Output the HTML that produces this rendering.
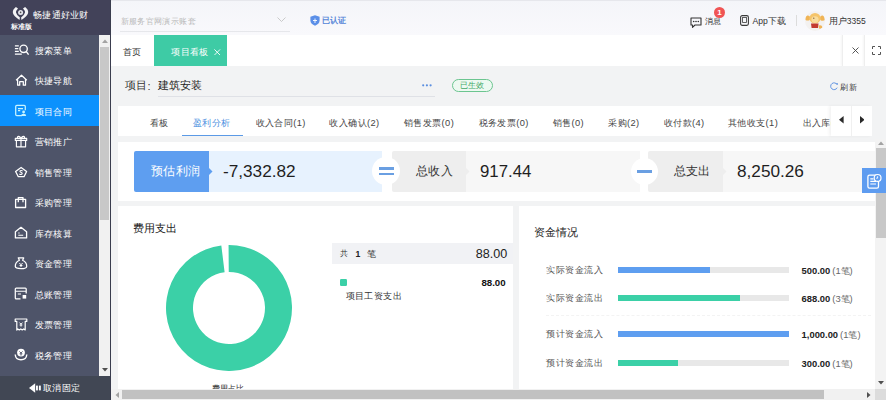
<!DOCTYPE html>
<html><head><meta charset="utf-8">
<style>
*{box-sizing:border-box;margin:0;padding:0}
html,body{width:886px;height:400px;overflow:hidden;background:#f2f3f4;font-family:"Liberation Sans",sans-serif;color:#333}
.a{position:absolute}
.t{position:absolute;white-space:nowrap;line-height:1}
#side{left:0;top:0;width:111px;height:400px;background:#4e5469}
#logo{left:0;top:0;width:111px;height:34.5px;background:#424259}
.mi{position:absolute;left:0;width:99px;height:30.5px;color:#fff;font-size:9.3px;letter-spacing:0.45px}
.mi span{position:absolute;left:34.5px;top:12.4px;line-height:1}
.mi svg{position:absolute;left:14px;top:10.5px}
.mi.on{background:#0c91fd}
#sbar{left:99px;top:34.5px;width:11px;height:341.5px;background:#f1f1f1}
#sthumb{left:100px;top:47px;width:9px;height:173px;background:#c8c8c8}
#sbot{left:0;top:376px;width:111px;height:24px;background:#414754;color:#fff}
#hdr{left:111px;top:0;width:775px;height:35px;background:linear-gradient(#f4f5f9,#f9f9fc)}
#tabbar{left:111px;top:35px;width:775px;height:30.6px;background:#fff}
.card{position:absolute;background:#fff}
.tab{position:absolute;top:119.2px;font-size:9.3px;letter-spacing:0.4px;color:#444;white-space:nowrap;line-height:1}
.seg{position:absolute;top:150.6px;height:41px}
.lab{position:absolute;top:165.3px;font-size:12.3px;letter-spacing:0.45px;line-height:1;white-space:nowrap}
.val{position:absolute;top:162.7px;font-size:17.2px;line-height:1;color:#1f1f1f;white-space:nowrap}
.circ{position:absolute;width:27px;height:27px;border-radius:50%;background:#fff}
.flab{position:absolute;font-size:9.3px;letter-spacing:0.45px;color:#555;line-height:1;white-space:nowrap;left:546.3px}
.track{position:absolute;left:618px;width:171px;height:6px;background:#e8e8e8}
.fill{position:absolute;left:0;top:0;height:6px}
.fval{position:absolute;left:801.6px;font-size:9.4px;line-height:1;white-space:nowrap;color:#222}
.fval b{font-weight:bold}
.fval i{font-style:normal;color:#666;margin-left:2px}
</style></head><body>
<!-- sidebar -->
<div id="side" class="a"></div>
<div id="logo" class="a">
  <svg class="a" style="left:12px;top:6px" width="18" height="15" viewBox="0 0 18 15">
    <path d="M3.9 0.9Q0.3 3.6 0.9 6.9Q1.5 9.6 7.5 14.0L7.9 11.4Q4.3 8.8 4.0 6.6Q3.8 4.6 6.0 2.4Z" fill="#f4f4f6"/>
    <path d="M13.1 0.9Q16.7 3.6 16.1 6.9Q15.5 9.6 9.5 14.0L9.1 11.4Q12.7 8.8 13.0 6.6Q13.2 4.6 11.0 2.4Z" fill="#f4f4f6"/>
    <circle cx="8.6" cy="6.4" r="2.5" fill="#e4e4ea"/><circle cx="8.6" cy="6.4" r="0.8" fill="#555"/>
  </svg>
  <div class="t" style="left:33px;top:11px;font-size:9.3px;color:#fff;letter-spacing:0.3px">畅捷通好业财</div>
  <div class="t" style="left:10.8px;top:24.4px;font-size:6.7px;color:#fff;font-weight:bold">标准版</div>
</div>

<div class="mi" style="top:34.50px"><span>搜索菜单</span></div>
<div class="mi" style="top:64.98px"><span>快捷导航</span></div>
<div class="mi on" style="top:95.46px"><span>项目合同</span></div>
<div class="mi" style="top:125.94px"><span>营销推广</span></div>
<div class="mi" style="top:156.42px"><span>销售管理</span></div>
<div class="mi" style="top:186.90px"><span>采购管理</span></div>
<div class="mi" style="top:217.38px"><span>库存核算</span></div>
<div class="mi" style="top:247.86px"><span>资金管理</span></div>
<div class="mi" style="top:278.34px"><span>总账管理</span></div>
<div class="mi" style="top:308.82px"><span>发票管理</span></div>
<div class="mi" style="top:339.30px"><span>税务管理</span></div>

<svg class="a" style="left:0;top:0;pointer-events:none" width="111" height="400" viewBox="0 0 111 400" fill="none" stroke="#fff" stroke-width="1.25">
  <!-- search menu -->
  <path d="M14.9 45.8H18.8M14.9 48.6H18.3M14.9 51.4H18.8M14.9 54.2H21.8"/>
  <circle cx="23.6" cy="48.8" r="3.7" stroke-width="1.35"/>
  <path d="M26.3 51.6L28.6 54.6" stroke-width="1.4"/>
  <!-- home -->
  <path d="M16.1 80.3L21.5 75.2L26.8 80.3M17.6 79.4V85.2H19.7V81.7H23.3V85.2H25.5V79.4" stroke-linejoin="round"/>
  <!-- contract (active) -->
  <path d="M22 115.6H16.8Q15.7 115.6 15.7 114.5V106.5Q15.7 105.4 16.8 105.4H24.2Q25.3 105.4 25.3 106.5V110.2" stroke="#c8f4ff"/>
  <path d="M18 108.5H23M18 110.6H20.2" stroke="#c8f4ff"/>
  <circle cx="23.6" cy="112" r="1.4" fill="#c8f4ff" stroke="none"/>
  <path d="M21 115.9Q21 113.8 23.6 113.8Q26.2 113.8 26.2 115.9Z" fill="#c8f4ff" stroke="none"/>
  <!-- gift -->
  <path d="M15.3 138.4H26.7V140.4H15.3Z M16.4 140.4V146.8H25.6V140.4 M21 138.4V146.8 M21 138.2Q19.5 135.8 17.8 136.6Q17 137.4 18 138.2 M21 138.2Q22.5 135.8 24.2 136.6Q25 137.4 24 138.2" stroke-linejoin="round" stroke-width="1.15"/>
  <!-- sales pentagon -->
  <path d="M21.1 167.5L26.6 171.5L24 176.7H18.3L15.6 171.5Z" stroke-linejoin="round" stroke-width="1.3"/>
  <path d="M22.6 171Q21.6 170.2 20.4 170.7Q19.4 171.3 20.6 172.1L21.6 172.7Q22.8 173.5 21.6 174.3Q20.4 174.8 19.4 174" stroke-width="1.1"/>
  <!-- purchase bag -->
  <path d="M15.6 199.3H25.6V207.5H15.6Z M18.3 202.3V197.6H23V202.3" stroke-linejoin="round" stroke-width="1.3"/>
  <!-- warehouse -->
  <path d="M15.4 231.8L21 227.3L26.6 231.8V237.9H15.4Z" stroke-linejoin="round" stroke-width="1.3"/>
  <path d="M18.3 233H19.6M18.3 235.3H23.2" stroke-width="1.1"/>
  <!-- money bag -->
  <path d="M18.3 257.9H23.7L22.6 260.3Q26.8 262.3 26.7 266.4Q26.6 268.6 21 268.6Q15.4 268.6 15.3 266.4Q15.2 262.3 19.4 260.3Z" stroke-linejoin="round" stroke-width="1.25"/>
  <path d="M19.4 263L21 264.8L22.6 263M21 264.8V267M19.6 265.5H22.4" stroke-width="1"/>
  <!-- ledger -->
  <path d="M20.5 298.8H16.2Q15.3 298.8 15.3 297.9V289Q15.3 288.1 16.2 288.1H25.3Q26.2 288.1 26.2 289V293.5" stroke-width="1.25"/>
  <path d="M15.5 291.2H26M17.8 294H21" stroke-width="1.1"/>
  <rect x="22.6" y="295" width="3.6" height="3.6" fill="#fff" stroke="none"/>
  <!-- invoice -->
  <path d="M15.2 319H26.8V321.4H25.2V330L23.7 328.9L22.2 330L20.8 328.9L19.3 330L17.8 328.9L16.8 330V321.4H15.2Z" stroke-linejoin="round" stroke-width="1.2"/>
  <path d="M19.5 322.6L21 324.2L22.5 322.6M21 324.2V326.6M19.6 325H22.4" stroke-width="1"/>
  <!-- tax -->
  <path d="M15.2 354.5Q15.6 359.8 21 359.8Q26.4 359.8 26.8 354.5" stroke-width="1.4"/>
  <circle cx="21" cy="352.6" r="3.9" fill="#fff" stroke="none"/>
  <path d="M19.4 351.4L21 353L22.6 351.4M21 353V355.6M19.6 353.8H22.4" stroke="#4e5469" stroke-width="0.9"/>
</svg>
<div id="sbar" class="a"></div>
<div id="sthumb" class="a"></div>
<svg class="a" style="left:101.5px;top:38.5px" width="6" height="4"><path d="M0 4L3 0.5L6 4Z" fill="#a3a3a3"/></svg>
<svg class="a" style="left:101.5px;top:367.5px" width="6" height="4"><path d="M0 0L3 3.5L6 0Z" fill="#505050"/></svg>
<div id="sbot" class="a">
  <svg class="a" style="left:28.7px;top:7.3px" width="13" height="10" viewBox="0 0 13 10"><path d="M0 5L6.2 0.2V9.8Z" fill="#fff"/><rect x="7" y="2.6" width="1.9" height="4.8" fill="#fff"/><rect x="9.9" y="2.6" width="1.9" height="4.8" fill="#fff"/></svg>
  <div class="t" style="left:43px;top:8.3px;font-size:9.3px;letter-spacing:0.4px;color:#fff">取消固定</div>
</div>
<div class="a" style="left:110px;top:0;width:1px;height:400px;background:#3a3d4e"></div>

<!-- header -->
<div id="hdr" class="a">
  <div class="t" style="left:9.5px;top:17.3px;font-size:8.3px;letter-spacing:0.4px;color:#b8b8b8">新服务官网演示账套</div>
  <div class="a" style="left:9px;top:31px;width:170px;height:1px;background:#e6e7eb"></div>
  <svg class="a" style="left:166px;top:17px" width="9" height="5"><path d="M0.5 0.5L4.5 4.5L8.5 0.5" stroke="#c4c4c4" stroke-width="0.9" fill="none"/></svg>
  <svg class="a" style="left:199px;top:15px" width="10" height="11" viewBox="0 0 10 11"><path d="M5 0.3L9.6 1.8V5.5C9.6 8 7.5 9.8 5 10.7C2.5 9.8 0.4 8 0.4 5.5V1.8Z" fill="#5b8fe8"/><path d="M3 5.5H7M5 3.5V8" stroke="#fff" stroke-width="0.9"/></svg>
  <div class="t" style="left:210.5px;top:16.3px;font-size:8.4px;color:#5586d8;font-weight:bold">已认证</div>

  <svg class="a" style="left:578.5px;top:16.5px" width="12" height="11" viewBox="0 0 12 11"><path d="M1 1H11V8H5L2.5 10.3V8H1Z" stroke="#333" stroke-width="1.1" fill="none" stroke-linejoin="round"/><circle cx="3.7" cy="4.5" r="0.8" fill="#333"/><circle cx="6" cy="4.5" r="0.8" fill="#333"/><circle cx="8.3" cy="4.5" r="0.8" fill="#333"/></svg>
  <div class="t" style="left:593.6px;top:17.4px;font-size:8.3px;letter-spacing:0.3px;color:#333">消息</div>
  <div class="a" style="left:602.9px;top:7px;width:11px;height:11px;border-radius:50%;background:#f05454;color:#fff;font-size:8px;font-weight:bold;text-align:center;line-height:11px">1</div>
  <svg class="a" style="left:629px;top:14.8px" width="9" height="11" viewBox="0 0 9 11"><rect x="0.6" y="0.6" width="7.8" height="9.8" rx="1.6" stroke="#3a3a3a" stroke-width="1.1" fill="none"/><rect x="2.6" y="2.4" width="3.8" height="5" stroke="#3a3a3a" stroke-width="0.8" fill="none"/></svg>
  <div class="t" style="left:641.6px;top:17.2px;font-size:8.6px;color:#333">App下载</div>
  <div class="a" style="left:685px;top:15px;width:1px;height:10.6px;background:#dcdcdc"></div>
  <div class="a" style="left:694px;top:10.5px;width:20px;height:20px;border-radius:50%;background:#f3f1f0;overflow:hidden">
    <svg width="20" height="20" viewBox="0 0 20 20"><circle cx="2.6" cy="7" r="2.6" fill="#f0b456"/><circle cx="17.6" cy="7.2" r="2.6" fill="#f0b456"/><ellipse cx="10" cy="7.3" rx="5.6" ry="5.3" fill="#f5c46a"/><ellipse cx="10" cy="8.6" rx="3.6" ry="3.4" fill="#f9dc9c"/><circle cx="8.8" cy="7.2" r="0.6" fill="#6b4a2a"/><path d="M6 12.6H13.6L13 17H6.6Z" fill="#c33a30"/><path d="M13.6 14.5Q17 13.5 17.5 16.5Q16.5 18 14 17.5Z" fill="#f0b456"/></svg>
  </div>
  <div class="t" style="left:717.8px;top:17.2px;font-size:8.5px;color:#333">用户3355</div>
</div>

<!-- tab bar -->
<div class="a" style="left:111px;top:0;width:775px;height:1px;background:#e6e7ec"></div>
<div id="tabbar" class="a">
  <div class="t" style="left:12px;top:12.5px;font-size:9.2px;color:#333">首页</div>
  <div class="a" style="left:43px;top:0;width:73px;height:30.6px;background:#3ecba5">
    <div class="t" style="left:17.3px;top:12.6px;font-size:9.2px;letter-spacing:0.35px;color:#fff">项目看板</div><svg class="a" style="left:60px;top:13.5px" width="6.5" height="6.5"><path d="M0.4 0.4L6.1 6.1M6.1 0.4L0.4 6.1" stroke="#fff" stroke-width="0.9"/></svg>
  </div>
  <div class="a" style="left:731px;top:0;width:1px;height:30.6px;background:#eee;box-shadow:-1px 0 2px rgba(0,0,0,0.06)"></div>
  <div class="a" style="left:753px;top:0;width:1px;height:30.6px;background:#eee;box-shadow:-1px 0 2px rgba(0,0,0,0.06)"></div>
  <svg class="a" style="left:740.8px;top:12.3px" width="7" height="7"><path d="M0.5 0.5L6.5 6.5M6.5 0.5L0.5 6.5" stroke="#444" stroke-width="0.9"/></svg>
  <svg class="a" style="left:760.5px;top:11px" width="9" height="9"><path d="M0.5 3V0.5H3M6 0.5H8.5V3M8.5 6V8.5H6M3 8.5H0.5V6" stroke="#555" stroke-width="1" fill="none"/></svg>
</div>

<!-- project header -->
<div class="t" style="left:125px;top:80.2px;font-size:11.1px;color:#333">项目</div><div class="t" style="left:147.6px;top:80.6px;font-size:11px;color:#333">:</div>
<div class="t" style="left:158px;top:80.2px;font-size:11.1px;color:#222">建筑安装</div>
<div class="a" style="left:158px;top:96px;width:277px;height:1px;background:#dfe1e6"></div>
<svg class="a" style="left:421.5px;top:83.5px" width="10" height="3"><circle cx="1.2" cy="1.3" r="1.1" fill="#5b8fe0"/><circle cx="4.9" cy="1.3" r="1.1" fill="#5b8fe0"/><circle cx="8.6" cy="1.3" r="1.1" fill="#5b8fe0"/></svg>
<div class="a" style="left:452px;top:79.2px;width:40.5px;height:13.2px;border:0.8px solid #6cc590;border-radius:7px;background:#edf9f1"></div>
<div class="t" style="left:459.6px;top:81.8px;font-size:8.1px;color:#42a866">已生效</div>
<svg class="a" style="left:829.5px;top:82px" width="8.5" height="8.5" viewBox="0 0 9 9"><path d="M7.6 3A3.6 3.6 0 1 0 7.6 6" stroke="#5b8fe0" stroke-width="1" fill="none"/><path d="M6.2 1.2L8.2 1V3.1Z" fill="#5b8fe0"/></svg>
<div class="t" style="left:840.3px;top:83px;font-size:8.3px;letter-spacing:0.3px;color:#333">刷新</div>

<!-- tabs card -->
<div class="card" style="left:118px;top:105.6px;width:754px;height:30.6px"></div>
<div class="tab" style="left:150px">看板</div>
<div class="tab" style="left:193px;color:#4a8fe0">盈利分析</div>
<div class="a" style="left:182px;top:134.5px;width:61px;height:1.4px;background:#5b9ae6"></div>
<div class="tab" style="left:255.7px">收入合同(1)</div>
<div class="tab" style="left:329.4px">收入确认(2)</div>
<div class="tab" style="left:404px">销售发票(0)</div>
<div class="tab" style="left:478.6px">税务发票(0)</div>
<div class="tab" style="left:552.7px">销售(0)</div>
<div class="tab" style="left:608.2px">采购(2)</div>
<div class="tab" style="left:663.8px">收付款(4)</div>
<div class="tab" style="left:728px">其他收支(1)</div>
<div class="tab" style="left:802.6px">出入库(0)</div>
<div class="a" style="left:831px;top:105.6px;width:41px;height:30.6px;background:#fff;box-shadow:-2px 0 3px rgba(0,0,0,0.05)"></div>
<div class="a" style="left:851px;top:105.6px;width:1px;height:30.6px;background:#f0f0f0"></div>
<svg class="a" style="left:839.2px;top:116.4px" width="4.6" height="7.4"><path d="M4.6 0V7.4L0 3.7Z" fill="#2a2a2a"/></svg>
<svg class="a" style="left:859.6px;top:116.4px" width="4.6" height="7.4"><path d="M0 0V7.4L4.6 3.7Z" fill="#2a2a2a"/></svg>

<!-- summary card -->
<div class="card" style="left:118px;top:142px;width:760px;height:58.6px"></div>
<div class="seg" style="left:134px;width:74.6px;background:#5e9ef0;border-radius:2px 0 0 2px"></div>
<div class="seg" style="left:208.6px;width:173.9px;background:#e7f2fe"></div>
<svg class="a" style="left:208.6px;top:167.5px" width="4" height="7"><path d="M0 0L3.5 3.5L0 7Z" fill="#5e9ef0"/></svg>
<div class="lab" style="left:151px;color:#fff">预估利润</div>
<div class="val" style="left:223px">-7,332.82</div>

<div class="seg" style="left:391.5px;width:74.1px;background:#eeeeee;border-radius:2px 0 0 2px"></div>
<div class="seg" style="left:465.6px;width:174px;background:#f7f7f7"></div>
<svg class="a" style="left:465.6px;top:167.5px" width="4" height="7"><path d="M0 0L3.5 3.5L0 7Z" fill="#eeeeee"/></svg>
<div class="lab" style="left:416px;color:#333">总收入</div>
<div class="val" style="left:480px;font-size:16.8px;top:163.7px">917.44</div>

<div class="seg" style="left:648px;width:75px;background:#eeeeee;border-radius:2px 0 0 2px"></div>
<div class="seg" style="left:723px;width:160px;background:#f7f7f7"></div>
<svg class="a" style="left:723px;top:167.5px" width="4" height="7"><path d="M0 0L3.5 3.5L0 7Z" fill="#eeeeee"/></svg>
<div class="lab" style="left:673.6px;color:#333">总支出</div>
<div class="val" style="left:737px">8,250.26</div>

<div class="circ" style="left:372.2px;top:157.3px;width:27.8px;height:27.8px"></div>
<div class="a" style="left:379.2px;top:167px;width:14.8px;height:2.8px;background:#6a9fe2"></div>
<div class="a" style="left:379.2px;top:172.8px;width:14.8px;height:2.7px;background:#6a9fe2"></div>
<div class="circ" style="left:630.8px;top:157.5px"></div>
<div class="a" style="left:637px;top:169.8px;width:15px;height:3px;background:#6a9fe2"></div>

<!-- card 1 -->
<div class="card" style="left:118px;top:206px;width:395px;height:200px"></div>
<div class="t" style="left:132.6px;top:223px;font-size:11px;color:#222">费用支出</div>
<svg class="a" style="left:166px;top:245px" width="126" height="126" viewBox="-63 -63 126 126">
  <path fill="#3bd0a7" d="M-0.440,-62.998 A63 63 0 1 1 -7.678,-62.530 L-4.387,-35.732 A36 36 0 1 0 -0.251,-35.999 Z"/>
</svg>
<div class="t" style="left:211.5px;top:384px;font-size:8.3px;letter-spacing:0.3px;color:#333">费用占比</div>
<div class="a" style="left:331.7px;top:243px;width:181.3px;height:21.3px;background:#f1f2f5"></div>
<div class="t" style="left:339.8px;top:250.2px;font-size:8px;color:#333">共</div><div class="t" style="left:355.6px;top:250.2px;font-size:8.6px;color:#222;font-weight:bold">1</div><div class="t" style="left:367.3px;top:250.2px;font-size:8.6px;color:#333">笔</div>
<div class="t" style="left:475.8px;top:247.8px;font-size:12.6px;color:#222">88.00</div>
<div class="a" style="left:340px;top:279px;width:7px;height:7px;border-radius:1.2px;background:#3bd0a7"></div>
<div class="t" style="left:481.4px;top:278px;font-size:9.7px;color:#111;font-weight:bold">88.00</div>
<div class="t" style="left:345.6px;top:291.6px;font-size:9.3px;letter-spacing:0.45px;color:#333">项目工资支出</div>

<!-- card 2 -->
<div class="card" style="left:518.75px;top:206px;width:370px;height:200px"></div>
<div class="t" style="left:533.9px;top:226.6px;font-size:11px;color:#222">资金情况</div>
<div class="flab" style="top:266.2px">实际资金流入</div>
<div class="flab" style="top:294.2px">实际资金流出</div>
<div class="flab" style="top:330.2px">预计资金流入</div>
<div class="flab" style="top:359px">预计资金流出</div>
<div class="track" style="top:266.9px"><div class="fill" style="width:92px;background:#5e9ef0"></div></div>
<div class="track" style="top:295.3px"><div class="fill" style="width:121.7px;background:#3bd0a7"></div></div>
<div class="track" style="top:331px"><div class="fill" style="width:171px;background:#5e9ef0"></div></div>
<div class="track" style="top:360px"><div class="fill" style="width:60px;background:#3bd0a7"></div></div>
<div class="a" style="left:546px;top:315px;width:325px;height:0;border-top:1px dashed #f3f3f3"></div>
<div class="fval" style="top:265.5px"><b>500.00</b><i>(1笔)</i></div>
<div class="fval" style="top:294px"><b>688.00</b><i>(3笔)</i></div>
<div class="fval" style="top:329.5px"><b>1,000.00</b><i>(1笔)</i></div>
<div class="fval" style="top:358.5px"><b>300.00</b><i>(1笔)</i></div>

<!-- vertical scrollbar -->
<div class="a" style="left:874.6px;top:139px;width:11.4px;height:250px;background:#f3f3f3"></div>
<div class="a" style="left:875.5px;top:148px;width:10px;height:89.5px;background:#c8c8c8"></div>
<svg class="a" style="left:877.5px;top:140.5px" width="6" height="4"><path d="M0 4L3 0.5L6 4Z" fill="#a3a3a3"/></svg>
<svg class="a" style="left:877.5px;top:381px" width="6" height="4"><path d="M0 0L3 3.5L6 0Z" fill="#505050"/></svg>
<!-- horizontal scrollbar -->
<div class="a" style="left:111px;top:389px;width:764px;height:11px;background:#f1f1f1"></div>
<div class="a" style="left:122px;top:390px;width:702px;height:9px;background:#c1c1c1"></div>
<svg class="a" style="left:114.5px;top:391.5px" width="4" height="6"><path d="M4 0V6L0.5 3Z" fill="#a3a3a3"/></svg>
<svg class="a" style="left:867px;top:391.5px" width="4" height="6"><path d="M0 0V6L3.5 3Z" fill="#505050"/></svg>
<div class="a" style="left:875px;top:389px;width:11px;height:11px;background:#dcdcdc"></div>

<!-- floating icon -->
<div class="a" style="left:862px;top:168px;width:24px;height:24.6px;background:#5e9cf0">
  <svg class="a" style="left:0;top:0" width="24" height="24.6" viewBox="0 0 24 24.6"><rect x="5.9" y="7.2" width="10.6" height="13" rx="1.6" stroke="#fff" stroke-width="1.3" fill="none"/><path d="M8.3 10.8H11.5M8.3 13.4H14M8.3 16H14" stroke="#fff" stroke-width="1.2"/><circle cx="15.6" cy="9.9" r="3.4" stroke="#fff" stroke-width="1.2" fill="#5e9cf0"/><path d="M15.6 8.3V10.2H14.2" stroke="#fff" stroke-width="0.9" fill="none"/></svg>
</div>
</body></html>
